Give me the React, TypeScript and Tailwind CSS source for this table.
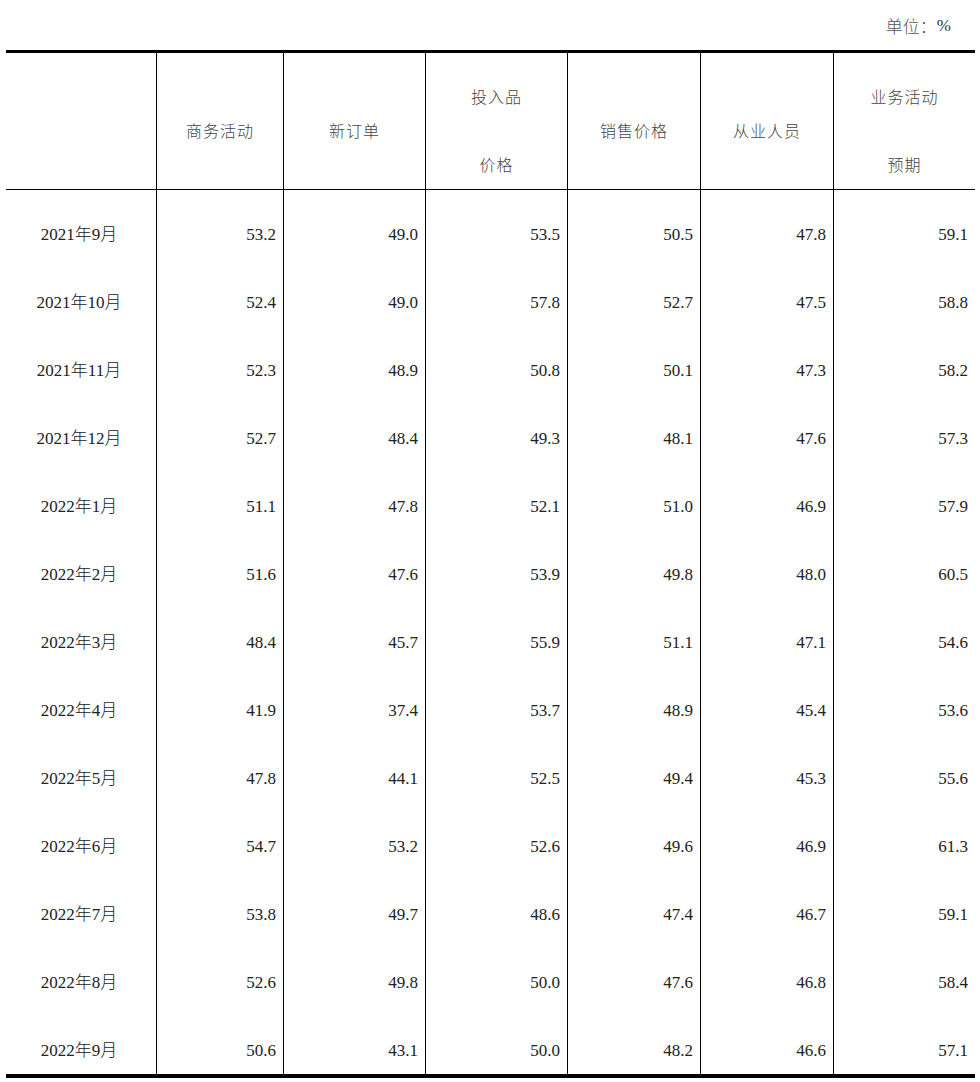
const cols = "grid grid-cols-[150px_127px_142px_142px_133px_133px_142px]";

const headers: string[][] = [
  ["商务活动"],
  ["新订单"],
  ["投入品", "价格"],
  ["销售价格"],
  ["从业人员"],
  ["业务活动", "预期"],
];

const rows: [string, string[]][] = [
  ["2021年9月", ["53.2", "49.0", "53.5", "50.5", "47.8", "59.1"]],
  ["2021年10月", ["52.4", "49.0", "57.8", "52.7", "47.5", "58.8"]],
  ["2021年11月", ["52.3", "48.9", "50.8", "50.1", "47.3", "58.2"]],
  ["2021年12月", ["52.7", "48.4", "49.3", "48.1", "47.6", "57.3"]],
  ["2022年1月", ["51.1", "47.8", "52.1", "51.0", "46.9", "57.9"]],
  ["2022年2月", ["51.6", "47.6", "53.9", "49.8", "48.0", "60.5"]],
  ["2022年3月", ["48.4", "45.7", "55.9", "51.1", "47.1", "54.6"]],
  ["2022年4月", ["41.9", "37.4", "53.7", "48.9", "45.4", "53.6"]],
  ["2022年5月", ["47.8", "44.1", "52.5", "49.4", "45.3", "55.6"]],
  ["2022年6月", ["54.7", "53.2", "52.6", "49.6", "46.9", "61.3"]],
  ["2022年7月", ["53.8", "49.7", "48.6", "47.4", "46.7", "59.1"]],
  ["2022年8月", ["52.6", "49.8", "50.0", "47.6", "46.8", "58.4"]],
  ["2022年9月", ["50.6", "43.1", "50.0", "48.2", "46.6", "57.1"]],
];

const font = "font-['Liberation_Serif','Noto_Sans_CJK_SC',serif]";

// "2021年9月" -> year / month, with the CJK glyphs set light like the source
function DateLabel({ text }: { text: string }) {
  const [year, rest] = text.split("年");
  const month = rest.replace("月", "");
  return (
    <>
      {year}
      <span className="font-light">年</span>
      {month}
      <span className="font-light">月</span>
    </>
  );
}

export default function App() {
  return (
    <div className={`w-[980px] h-[1082px] bg-white text-[17px] ${font}`}>
      {/* unit label */}
      <div className="h-[50px] flex items-center justify-end pr-[29px] pt-[2px] text-[#555]">
        <span className="font-['Noto_Sans_CJK_SC',sans-serif] text-[17px] font-light">单位：</span>
        <span className="text-[#333]">%</span>
      </div>

      <div className="ml-[6px] w-[969px] border-t-[3px] border-b-[4px] border-black">
        {/* header */}
        <div className={`${cols} h-[137px] border-b border-black`}>
          <div />
          {headers.map((h, i) => (
            <div
              key={i}
              className="border-l border-black flex flex-col items-center justify-center gap-[34px] pt-[18px] font-['Noto_Sans_CJK_SC',sans-serif] font-light text-[16px] text-[#444] tracking-[1px]"
            >
              {h.map((line) => (
                <div key={line} className="leading-[34px]">{line}</div>
              ))}
            </div>
          ))}
        </div>

        {/* body */}
        {rows.map(([label, vals]) => (
          <div key={label} className={`${cols} h-[68px] text-[#222]`}>
            <div className="pt-[22px] leading-[46px] text-center pr-[4px]">
              <DateLabel text={label} />
            </div>
            {vals.map((v, i) => (
              <div key={i} className="border-l border-black pt-[22px] leading-[46px] text-right pr-[7px]">
                {v}
              </div>
            ))}
          </div>
        ))}
      </div>
    </div>
  );
}
